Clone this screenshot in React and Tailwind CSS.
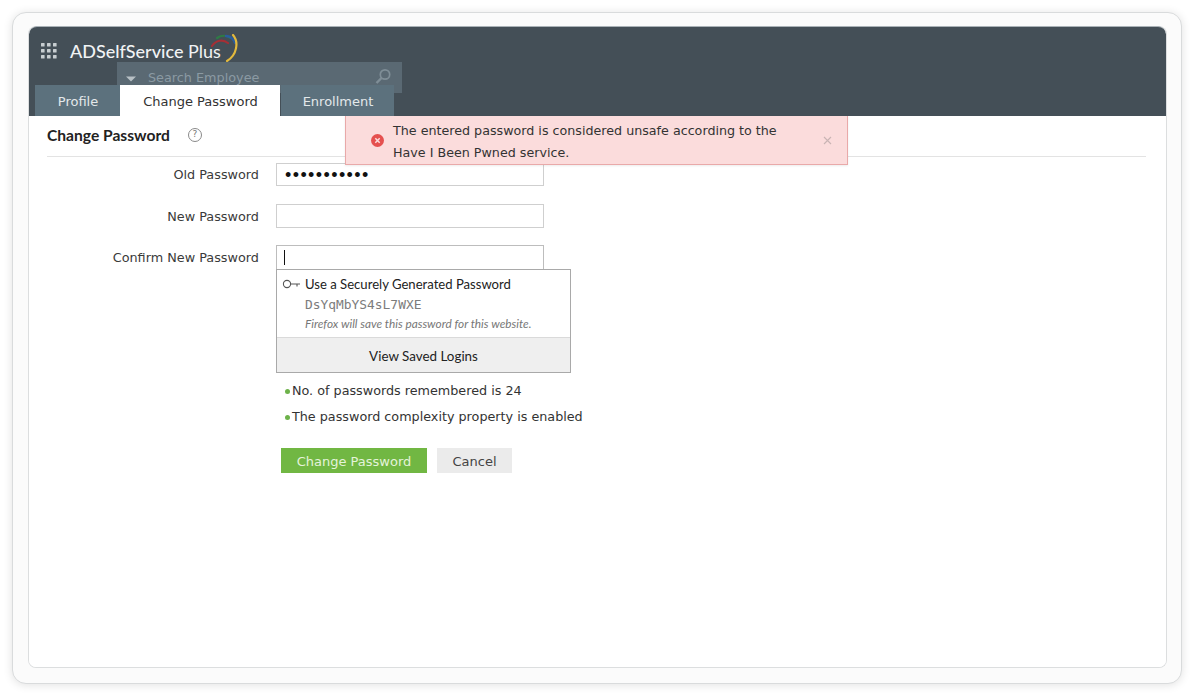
import React from "react";

const dv = "font-['DejaVu_Sans',sans-serif]";
const lato = "font-['Lato',sans-serif]";

function Field({ label, children, className = "" }) {
  return (
    <div className={`flex items-center ${className}`}>
      <label className={`w-[229px] pr-[17px] pt-px text-right text-[12.8px] text-[#3a3a3a] ${dv}`}>{label}</label>
      {children}
    </div>
  );
}

function Tab({ children, active, className = "" }) {
  return (
    <div
      className={`flex h-[31px] items-center justify-center pl-px pt-[3px] text-[13px] ${dv} ${
        active ? "bg-white text-[#333]" : "bg-[#5c717d] text-[#e3e8ea]"
      } ${className}`}
    >
      {children}
    </div>
  );
}

export default function App() {
  return (
    <div className="h-[700px] w-[1202px] overflow-hidden bg-white px-[12px] pt-[12px]">
      <div className="flex h-[672px] w-[1170px] flex-col rounded-[14px] border border-[#d9dbdc] bg-[#fbfbfb] pb-[15px] pl-[15px] pr-[14px] pt-[13px] shadow-[0_1px_10px_rgba(0,0,0,0.12)]">
        <div className="flex min-h-0 flex-1 flex-col overflow-hidden rounded-[8px] border border-t-0 border-[#dcdedf]">
          <header className="relative flex h-[90px] shrink-0 flex-col justify-between rounded-t-[8px] border-t border-[#aab2b7] bg-[#444f57]">
            <div className="flex items-center pl-[11px] pt-[13px]">
              <svg width="18" height="18" viewBox="0 0 18 18" className="mr-[12px]" fill="#c8ced1">
                {[1, 7, 13].flatMap((y) =>
                  [1, 7, 13].map((x) => <rect key={`${x}-${y}`} x={x} y={y} width="3.6" height="3.6" rx="0.6" />)
                )}
              </svg>
              <span className={`relative text-[18px] font-medium leading-[22px] text-[#f1f3f4] ${lato}`}>
                ADSelfService <span className="font-normal">Plus</span>
                <svg width="34" height="30" viewBox="0 0 34 30" className="absolute -top-[6px] left-[139px]" fill="none" strokeLinecap="round">
                  <path d="M3 12 C7 6 14 5 19 9" stroke="#a62f35" strokeWidth="2.2" />
                  <path d="M8 4 C12 1 18 1 21 4" stroke="#2f7a45" strokeWidth="2.2" />
                  <path d="M17 2 C21 2 25 5 26 9" stroke="#2a5d9e" strokeWidth="2.4" />
                  <path d="M24 1 C30 8 28 21 18 27" stroke="#e2b93d" strokeWidth="2.2" />
                </svg>
              </span>
            </div>
            <div className="absolute left-[88px] top-[35px] flex h-[31px] w-[285px] items-start bg-[#5a6973]">
              <svg width="12" height="8" viewBox="0 0 12 8" className="ml-[8px] mt-[13px]" fill="#b7c0c5">
                <path d="M1 1.5h10L6 6.5z" />
              </svg>
              <span className={`ml-[11px] mt-[8px] text-[12.8px] leading-[16px] text-[#8b9aa3] ${dv}`}>Search Employee</span>
              <svg width="17" height="17" viewBox="0 0 17 17" className="ml-auto mr-[10px] mt-[6px]" fill="none" stroke="#7f8e97" strokeWidth="1.7">
                <circle cx="10" cy="6.5" r="4.7" />
                <path d="M6.5 10 1.5 15" strokeWidth="2.4" />
              </svg>
            </div>
            <nav className="relative flex pl-[6px]">
              <Tab className="w-[85px]">Profile</Tab>
              <Tab active className="w-[160px]">Change Password</Tab>
              <Tab className="ml-px w-[113px]">Enrollment</Tab>
            </nav>
          </header>

          <main className="relative flex-1 bg-white pl-[18px] pr-[20px]">
            <div className="absolute left-[316px] top-0 z-10 flex h-[49px] w-[503px] items-center border border-t-0 border-[#e9a9a9] bg-[#fbdcdc] shadow-[0_1px_2px_rgba(0,0,0,0.08)]">
              <svg width="13" height="13" viewBox="0 0 13 13" className="ml-[25px] shrink-0">
                <circle cx="6.5" cy="6.5" r="6.5" fill="#e5504f" />
                <path d="M4.3 4.3l4.4 4.4M8.7 4.3l-4.4 4.4" stroke="#fbdcdc" strokeWidth="1.5" />
              </svg>
              <p className={`ml-[9px] w-[420px] pt-[3px] text-[12.7px] leading-[22px] text-[#333] ${dv}`}>
                The entered password is considered unsafe according to the
                <br />
                Have I Been Pwned service.
              </p>
              <svg width="9" height="9" viewBox="0 0 9 9" className="ml-[10px]" stroke="#c9b4b4" strokeWidth="1.1">
                <path d="M1 1l7 7M8 1L1 8" />
              </svg>
            </div>

            <div className="flex h-[41px] items-center border-b border-[#e3e3e3] pb-[2px]">
              <h1 className={`text-[15.6px] font-bold leading-[20px] text-[#222] ${lato}`}>Change Password</h1>
              <span className={`ml-[18px] flex h-[14px] w-[14px] items-center justify-center rounded-full border border-[#8a8a8a] text-[9px] text-[#777] ${dv}`}>?</span>
            </div>

            <form className="pt-[6px]">
              <Field label="Old Password">
                <div className="flex h-[23px] w-[268px] items-center border border-[#cfcfcf] bg-white pl-[8px] text-[18px] leading-none tracking-[1.4px] text-[#111]">
                  <span className="font-['Liberation_Sans',sans-serif]">•••••••••••</span>
                </div>
              </Field>
              <Field label="New Password" className="mt-[18px]">
                <div className="h-[24px] w-[268px] border border-[#cfcfcf] bg-white" />
              </Field>
              <Field label="Confirm New Password" className="mt-[17px]">
                <div className="flex h-[24px] w-[268px] items-center border border-b-0 border-[#bdbdbd] bg-white pl-[7px]">
                  <span className="h-[15px] w-px bg-[#111]" />
                </div>
              </Field>

              <div className="ml-[229px] mr-auto w-[295px] border border-[#a9a9a9] bg-white">
                <div className="relative h-[67px]">
                  <svg width="19" height="10" viewBox="0 0 19 10" className="absolute left-[5px] top-[9px]" fill="none" stroke="#555" strokeWidth="1.1">
                    <circle cx="5" cy="5" r="3.6" />
                    <path d="M8.6 5H18M15 5v2.6" />
                  </svg>
                  <div className="pl-[28px] pt-[5px]">
                    <div className={`text-[13.1px] leading-[18px] text-[#222] ${lato}`}>Use a Securely Generated Password</div>
                    <div className="mt-[4px] font-['DejaVu_Sans_Mono',monospace] text-[12.9px] leading-[15px] text-[#7c7c7c]">DsYqMbYS4sL7WXE</div>
                    <div className={`mt-[5px] text-[11.8px] italic leading-[13px] text-[#777] ${lato}`}>Firefox will save this password for this website.</div>
                  </div>
                </div>
                <div className={`flex h-[35px] items-center justify-center border-t border-[#dadada] bg-[#efefef] pt-[2px] text-[13.4px] text-[#222] ${lato}`}>
                  View Saved Logins
                </div>
              </div>

              <ul className={`ml-[238px] mt-[10px] text-[12.75px] leading-[16px] text-[#333] ${dv}`}>
                <li className="flex items-center">
                  <span className="mr-[2px] h-[5px] w-[5px] rounded-full bg-[#6db24a]" />No. of passwords remembered is 24
                </li>
                <li className="mt-[10px] flex items-center">
                  <span className="mr-[2px] h-[5px] w-[5px] rounded-full bg-[#6db24a]" />The password complexity property is enabled
                </li>
              </ul>

              <div className={`ml-[234px] mt-[23px] flex gap-[10px] text-[13px] ${dv}`}>
                <button type="button" className="h-[25px] w-[146px] bg-[#71b743] pt-[2px] text-[#e4f3da]">Change Password</button>
                <button type="button" className="h-[25px] w-[75px] bg-[#ebebeb] pt-[2px] text-[#444]">Cancel</button>
              </div>
            </form>
          </main>
        </div>
      </div>
    </div>
  );
}
